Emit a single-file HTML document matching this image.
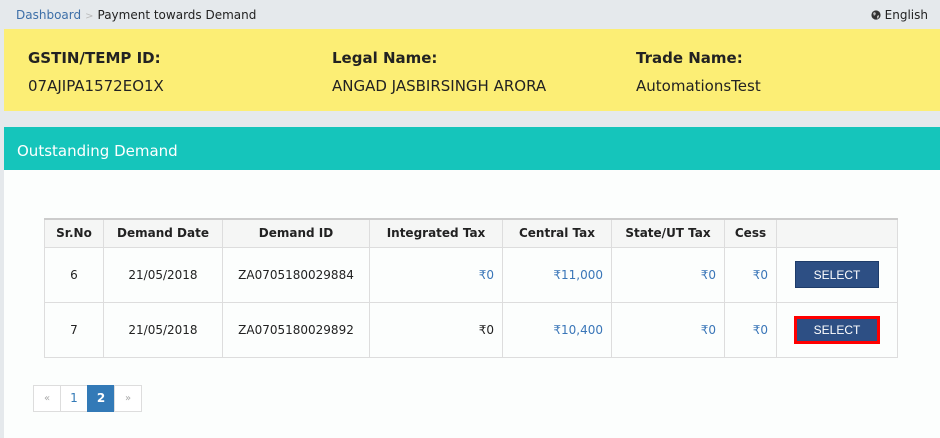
<!DOCTYPE html>
<html><head><meta charset="utf-8"><style>
*{box-sizing:border-box;margin:0;padding:0}
body{width:940px;height:438px;background:#e5e9ec;font-family:"DejaVu Sans",Verdana,sans-serif;color:#222;position:relative;overflow:hidden}
.bc{position:absolute;top:8px;left:16px;font-size:12px}
.bc a{color:#3d6fa8;text-decoration:none}
.bc .s{color:#bbb;margin:0 4px;font-size:10px}
.en{position:absolute;top:8px;right:12px;font-size:12px}
.yl{position:absolute;left:4px;right:0;top:29px;height:82px;background:#fcee75}
.f{position:absolute;top:20px}
.f b{display:block;font-size:15px;font-weight:bold;margin-bottom:9px}
.f span{font-size:15px}
.tl{position:absolute;left:4px;right:0;top:127px;height:43px;background:#15c5bb;color:#fff;font-size:15px;padding:15px 0 0 13px}
.wh{position:absolute;left:4px;right:0;top:170px;bottom:0;background:#fcfefd}
table{position:absolute;left:44px;top:218px;border-collapse:collapse;font-size:12px}
td,th{border:1px solid #ddd;text-align:center;height:55px}
th{height:28px;background:#f5f6f5;font-weight:bold;border-top:2px solid #ccc}
.r{text-align:right;padding-right:8px;color:#3a76b8}
.d{color:#222}
.btn{display:inline-block;width:84px;height:27px;background:#2d4f84;color:#fff;font-family:"Liberation Sans",Arial,sans-serif;font-size:12px;line-height:27px;border:1px solid #1e3c6a}
.red{border:3px solid #f00;width:86px;height:28px;line-height:22px}
.pg{position:absolute;left:33px;top:385px;display:flex}
.pg div{width:28px;height:27px;border:1px solid #ddd;margin-left:-1px;text-align:center;line-height:25px;font-size:12px;color:#337ab7;background:#fff}
.pg .a{background:#337ab7;color:#fff;border-color:#337ab7;font-weight:bold}
.pg .g{color:#aaa;font-size:10px}
</style></head><body>
<div class="bc"><a>Dashboard</a><span class="s">&gt;</span>Payment towards Demand</div>
<div class="en"><svg width="10" height="10" viewBox="0 0 10 10" style="vertical-align:-1px"><circle cx="5" cy="5" r="4.6" fill="#333"/><path d="M2 3l2-1 1 2-2 2zM6 6l2-1v2l-2 2z" fill="#bbb"/></svg> English</div>
<div class="yl">
<div class="f" style="left:24px"><b>GSTIN/TEMP ID:</b><span>07AJIPA1572EO1X</span></div>
<div class="f" style="left:328px"><b>Legal Name:</b><span>ANGAD JASBIRSINGH ARORA</span></div>
<div class="f" style="left:632px"><b>Trade Name:</b><span>AutomationsTest</span></div>
</div>
<div class="tl">Outstanding Demand</div>
<div class="wh"></div>
<table>
<tr><th style="width:59px">Sr.No</th><th style="width:119px">Demand Date</th><th style="width:147px">Demand ID</th><th style="width:133px">Integrated Tax</th><th style="width:109px">Central Tax</th><th style="width:113px">State/UT Tax</th><th style="width:52px">Cess</th><th style="width:121px"></th></tr>
<tr><td>6</td><td>21/05/2018</td><td>ZA0705180029884</td><td class="r">₹0</td><td class="r">₹11,000</td><td class="r">₹0</td><td class="r">₹0</td><td><span class="btn">SELECT</span></td></tr>
<tr><td>7</td><td>21/05/2018</td><td>ZA0705180029892</td><td class="r d">₹0</td><td class="r">₹10,400</td><td class="r">₹0</td><td class="r">₹0</td><td><span class="btn red">SELECT</span></td></tr>
</table>
<div class="pg"><div class="g" style="margin-left:0">«</div><div>1</div><div class="a">2</div><div class="g">»</div></div>
</body></html>
